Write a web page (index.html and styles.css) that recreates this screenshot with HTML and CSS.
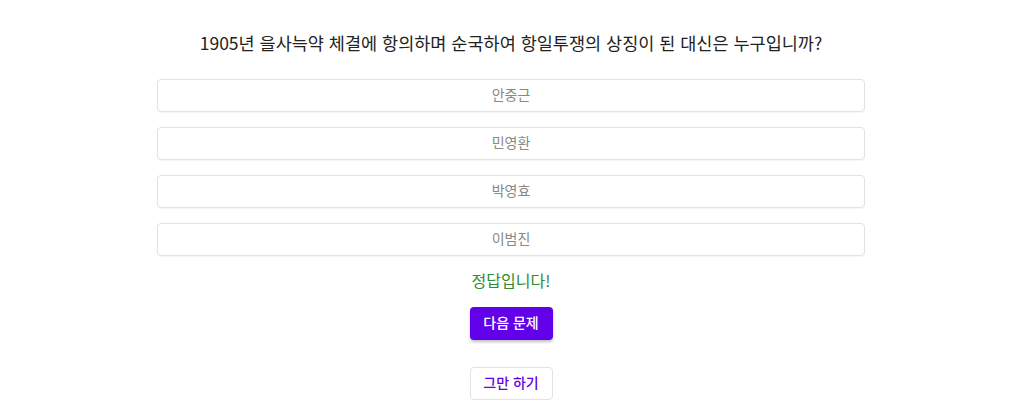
FILE: index.html
```html
<!DOCTYPE html>
<html lang="ko">
<head>
<meta charset="utf-8">
<link rel="stylesheet" href="styles.css">
</head>
<body>
<div class="quiz">
  <h1 class="question">1905년 을사늑약 체결에 항의하며 순국하여 항일투쟁의 상징이 된 대신은 누구입니까?</h1>
  <div class="options">
    <button class="option">안중근</button>
    <button class="option">민영환</button>
    <button class="option">박영효</button>
    <button class="option">이범진</button>
  </div>
  <p class="result">정답입니다!</p>
  <button class="btn primary">다음 문제</button>
  <button class="btn outline">그만 하기</button>
</div>
</body>
</html>
```
FILE: styles.css
```css
html, body {
  margin: 0;
  padding: 0;
  background: #fff;
}
body {
  font-family: "Noto Sans CJK KR", "Noto Sans", sans-serif;
  color: #222;
}
.quiz {
  display: flex;
  flex-direction: column;
  align-items: center;
  padding-top: 29px;
  padding-right: 2px;
}
.question {
  margin: 0;
  font-size: 17.5px;
  font-weight: 400;
  line-height: 28px;
  color: #222;
}
.options {
  display: flex;
  flex-direction: column;
  gap: 15px;
  margin-top: 22px;
  width: 708px;
}
.option {
  height: 33px;
  border: 1px solid #e2e2e2;
  border-radius: 4px;
  background: #fff;
  color: #888;
  font-family: inherit;
  font-size: 14px;
  padding: 0 0 3px;
  box-shadow: 0 1px 1px rgba(0,0,0,0.04);
}
.result {
  margin: 13px 0 0;
  font-size: 16px;
  line-height: 22px;
  color: #2e8b2e;
}
.btn {
  width: 83px;
  height: 33px;
  border-radius: 4px;
  font-family: inherit;
  font-size: 14px;
  font-weight: 500;
  padding: 0 0 3px;
}
.primary {
  margin-top: 16px;
  background: #6200ea;
  color: #fff;
  border: none;
  box-shadow: 0 2px 3px rgba(0,0,0,0.25);
}
.outline {
  margin-top: 27px;
  background: #fff;
  color: #6200ea;
  border: 1px solid #e2e2e2;
}
```
